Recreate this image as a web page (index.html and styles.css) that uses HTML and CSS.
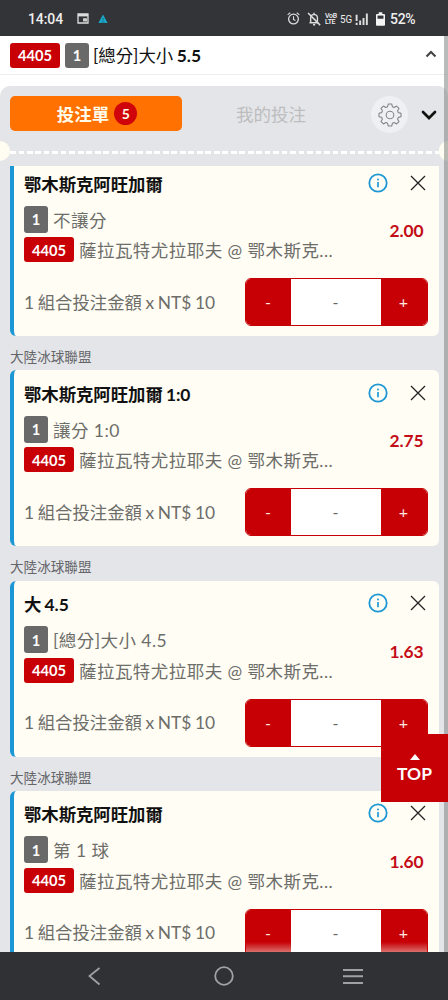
FILE: index.html
```html
<!DOCTYPE html>
<html lang="zh-Hant">
<head>
<meta charset="utf-8">
<meta name="viewport" content="width=device-width">
<title>投注單</title>
<link rel="stylesheet" href="styles.css">
</head>
<body>
<svg class="defs" width="0" height="0">
  <symbol id="info" viewBox="0 0 20 20"><circle cx="10" cy="10" r="8.700" fill="none" stroke="#1e98d4" stroke-width="1.8"/><path d="M10 9v5.2" stroke="#1e98d4" stroke-width="1.7"/><circle cx="10" cy="6.4" r="1" fill="#1e98d4"/></symbol>
  <symbol id="close" viewBox="0 0 16 16"><path d="M1 1l14 14M15 1L1 15" stroke="#222" stroke-width="1.3" fill="none"/></symbol>
</svg>
<div class="screen">
  <header class="status">
    <span class="time">14:04</span>
    <svg class="st-cal" viewBox="0 0 12 11"><path d="M1 1h10v9H1z" fill="none" stroke="#ddd" stroke-width="1.3"/><path d="M1 2.2h10" stroke="#ddd" stroke-width="2.4"/><path d="M6 5.2h4v3.3H6z" fill="#ccc"/></svg>
    <svg class="st-tri" viewBox="0 0 10 10"><path d="M5 .5L9.6 9H.4z" fill="#1ba7c8"/><path d="M5 4v2.500M3.500 9L5 7.500 6.500 9" fill="none" stroke="#176c83" stroke-width=".9"/></svg>
    <svg class="st-alarm" viewBox="0 0 12 12"><circle cx="6" cy="6.5" r="4.5" fill="none" stroke="#ddd" stroke-width="1.2"/><path d="M6 4v2.8l1.8 1M.6 2.6L3 .7M11.4 2.6L9 .7" stroke="#ddd" fill="none"/></svg>
    <svg class="st-bell" viewBox="0 0 13 13"><path d="M2.3 10h8.2M3.4 10V5.6q0-3 3.1-3.4 3.2.4 3.2 3.4V9M5.6 11.8h2M6.5.8v1.4" fill="none" stroke="#ddd" stroke-width="1.3"/><path d="M1 1l11.2 11.2" stroke="#ddd" stroke-width="1.4"/></svg>
    <span class="lte"><span>VoB</span><span>LTE</span></span>
    <span class="net">5G</span>
    <svg class="st-sig" viewBox="0 0 13 13"><path d="M1 2.5v5.8M1 10v2M4.3 8v4M7.4 5.5V12M10.5 1.500V12" transform="translate(.5 0)" stroke="#ddd" stroke-width="1.8"/></svg>
    <svg class="st-bat" viewBox="0 0 10 15"><path d="M3 0h4v2h2q1 0 1 1v11q0 1-1 1H1q-1 0-1-1V3q0-1 1-1h2z" fill="#f4f4f4"/><path d="M1.7 3.7h6.6v3.5H1.7z" fill="#333438"/></svg>
    <span class="pct">52%</span>
  </header>
  <div class="match">
    <span class="tag red">4405</span><span class="tag grey">1</span>
    <span class="market">[總分]大小 <b>5.5</b></span>
    <svg class="up" viewBox="0 0 12 8"><path d="M1.5 6.5L6 2l4.5 4.5" fill="none" stroke="#444" stroke-width="2.1"/></svg>
  </div>
  <main class="slip">
    <nav class="tabs">
      <div class="tab active">投注單<span class="count">5</span></div>
      <div class="tab">我的投注</div>
      <div class="gear"><svg viewBox="-12 -12 24 24"><path d="M-2.400-8.300L-1.700-11H1.700L2.400-8.300 4.170-7.570 6.580-8.980 8.980-6.580 7.570-4.170 8.300-2.400 11-1.700V1.700L8.300 2.400 7.570 4.170 8.980 6.580 6.580 8.980 4.170 7.570 2.400 8.300 1.700 11H-1.700L-2.400 8.300-4.170 7.570-6.580 8.980-8.980 6.580-7.570 4.170-8.300 2.400-11 1.700V-1.700L-8.300-2.400-7.570-4.170-8.980-6.580-6.580-8.980-4.170-7.570z" fill="none" stroke="#858689" stroke-width="1.100" stroke-linejoin="round"/><circle r="3.800" fill="none" stroke="#858689" stroke-width="1.100"/></svg></div>
      <svg class="down" viewBox="0 0 16 10"><path d="M2 2l6 6 6-6" fill="none" stroke="#111" stroke-width="2.7" stroke-linecap="round"/></svg>
    </nav>
    <div class="tear"><i class="notch"></i><i class="dash"></i><i class="notch right"></i></div>
    <div class="list">
      <section class="card first">
        <div class="head"><h2>鄂木斯克阿旺加爾</h2><svg class="info"><use href="#info"/></svg><svg class="close"><use href="#close"/></svg></div>
        <div class="detail">
          <div class="lines"><p class="kind"><span class="tag grey">1</span>不讓分</p><p class="teams"><span class="tag red">4405</span>薩拉瓦特尤拉耶夫 @ 鄂木斯克...</p></div>
          <strong class="odds">2.00</strong>
        </div>
        <div class="stake"><span>1 組合投注金額 x NT$ 10</span><div class="stepper"><b>-</b><em>-</em><b>+</b></div></div>
      </section>
      <h3 class="league">大陸冰球聯盟</h3>
      <section class="card">
        <div class="head"><h2>鄂木斯克阿旺加爾 1:0</h2><svg class="info"><use href="#info"/></svg><svg class="close"><use href="#close"/></svg></div>
        <div class="detail">
          <div class="lines"><p class="kind"><span class="tag grey">1</span>讓分 1:0</p><p class="teams"><span class="tag red">4405</span>薩拉瓦特尤拉耶夫 @ 鄂木斯克...</p></div>
          <strong class="odds">2.75</strong>
        </div>
        <div class="stake"><span>1 組合投注金額 x NT$ 10</span><div class="stepper"><b>-</b><em>-</em><b>+</b></div></div>
      </section>
      <h3 class="league">大陸冰球聯盟</h3>
      <section class="card">
        <div class="head"><h2>大 4.5</h2><svg class="info"><use href="#info"/></svg><svg class="close"><use href="#close"/></svg></div>
        <div class="detail">
          <div class="lines"><p class="kind"><span class="tag grey">1</span>[總分]大小 4.5</p><p class="teams"><span class="tag red">4405</span>薩拉瓦特尤拉耶夫 @ 鄂木斯克...</p></div>
          <strong class="odds">1.63</strong>
        </div>
        <div class="stake"><span>1 組合投注金額 x NT$ 10</span><div class="stepper"><b>-</b><em>-</em><b>+</b></div></div>
      </section>
      <h3 class="league">大陸冰球聯盟</h3>
      <section class="card">
        <div class="head"><h2>鄂木斯克阿旺加爾</h2><svg class="info"><use href="#info"/></svg><svg class="close"><use href="#close"/></svg></div>
        <div class="detail">
          <div class="lines"><p class="kind"><span class="tag grey">1</span>第 1 球</p><p class="teams"><span class="tag red">4405</span>薩拉瓦特尤拉耶夫 @ 鄂木斯克...</p></div>
          <strong class="odds">1.60</strong>
        </div>
        <div class="stake"><span>1 組合投注金額 x NT$ 10</span><div class="stepper last"><b>-</b><em>-</em><b>+</b></div></div>
      </section>
    </div>
  </main>
  <footer class="navbar">
    <svg viewBox="0 0 448 48"><g fill="none" stroke="#a0a1a4" stroke-width="1.8"><path d="M99.5 16L89.500 24l10 8.500"/><circle cx="224" cy="24" r="8.800"/><path d="M343 18h20M343 24.300h20M343 31h20" stroke-width="2"/></g></svg>
  </footer>
  <i class="scrollbar"></i>
  <a class="top"><svg viewBox="0 0 10 6"><path d="M0 6L5 0l5 6z" fill="#fff"/></svg>TOP</a>
</div>
</body>
</html>
```
FILE: styles.css
```css
* { box-sizing: border-box; }
body { margin: 0; background: #fff; font-family: Lato, "Noto Sans CJK TC", sans-serif; }
h2, h3, p { margin: 0; font-weight: 400; }
svg { display: block; flex: none; }
.defs { position: absolute; }
.screen { position: relative; width: 448px; height: 1000px; overflow: hidden; display: flex; flex-direction: column; }

.status { height: 36px; flex: none; background: #333438; color: #eee; display: flex; align-items: center; padding: 1px 0 0 28px; font-family: Roboto, sans-serif; }
.time { width: 35px; font-size: 14px; font-weight: 500; letter-spacing: -.1px; }
.st-cal { width: 12px; height: 11px; margin-left: 14px; }
.st-tri { width: 10px; height: 10px; margin-left: 9px; }
.st-alarm { width: 13px; height: 13px; margin-left: 179px; }
.st-bell { width: 14px; height: 14px; margin-left: 7px; }
.lte { display: flex; flex-direction: column; font-size: 7px; line-height: 6px; font-weight: 500; width: 12px; margin-left: 4px; letter-spacing: -.3px; }
.net { font-size: 11.500px; width: 13px; margin-left: 3px; transform: scaleX(.85); transform-origin: left; }
.st-sig { width: 14px; height: 14px; margin-left: 2px; }
.st-bat { width: 9px; height: 14px; margin-left: 7px; }
.pct { font-size: 14px; font-weight: 500; margin-left: 5px; letter-spacing: -.3px; }

.match { height: 39px; flex: none; display: flex; align-items: center; border-bottom: 1px solid #eee; padding: 0 11px 0 10px; font-size: 17.4px; color: #111; }
.match .grey { margin-left: 5px; }
.market { margin: -1px 0 0 4px; flex: 1; white-space: nowrap; word-spacing: -1px; }
.up { width: 12px; height: 8px; margin-top: -2px; }

.tag { display: inline-flex; align-items: center; justify-content: center; border-radius: 3px; color: #fff; font-weight: 700; font-size: 14.700px; flex: none; }
.tag.red { width: 50px; height: 25px; background: #c80005; }
.tag.grey { width: 24px; height: 27px; background: #696969; }
.match .grey { height: 25px; }

.slip { margin-top: 11px; height: 866px; flex: none; background: #e4e5e8; border-radius: 10px 10px 0 0; overflow: hidden; display: flex; flex-direction: column; }
.tabs { height: 60px; padding: 10px 11px 0 10px; display: flex; align-items: flex-start; flex: none; }
.tab { width: 178px; height: 35px; display: flex; align-items: center; justify-content: center; font-size: 17.5px; color: #bcbdbf; }
.tab.active { width: 172px; background: #ff7100; color: #fffbea; border-radius: 5px; font-weight: 700; padding-left: 2px; }
.count { width: 23px; height: 23px; border-radius: 50%; background: #d0040b; font-size: 14px; margin-left: 5px; display: flex; align-items: center; justify-content: center; }
.gear { width: 37px; height: 37px; margin-left: 11px; border-radius: 50%; background: #eff0f4; display: flex; align-items: center; justify-content: center; }
.gear svg { width: 24px; height: 24px; }
.down { width: 16px; height: 10px; margin: 14px 0 0 13px; }
.tear { height: 20px; flex: none; display: flex; align-items: center; justify-content: space-between; margin: -5px 0 0; }
.notch { width: 10px; height: 20px; background: #fffdf2; border-radius: 0 10px 10px 0; }
.notch.right { border-radius: 10px 0 0 10px; width: 9px; }
.dash { flex: 1; height: 3px; margin-top: 2px; background: repeating-linear-gradient(90deg, #fff 0 5.500px, transparent 5.500px 8.500px); }
.list { margin-top: 5px; height: 786px; overflow: hidden; padding: 0 9.500px 0 10px; }
.card { height: 176px; background: #fffdf4; border-left: 4px solid #1b97d5; border-radius: 6px; padding: 12px 10px 0 10px; }
.card.first { margin-top: -6px; }
.head { height: 24px; display: flex; align-items: center; }
h2 { flex: 1; font-size: 17.400px; font-weight: 700; color: #111; letter-spacing: -.05px; word-spacing: -1px; margin-top: -2px; }
.info { width: 20px; height: 20px; margin-top: -3px; }
.close { width: 16px; height: 16px; margin: -3px 3px 0 22px; }
.detail { height: 66px; padding-top: 9px; display: flex; }
.lines { flex: 1; color: #6d6d6a; font-size: 17.500px; white-space: nowrap; }
.kind, .teams { display: flex; align-items: center; letter-spacing: .45px; }
.kind { height: 28px; }
.teams { height: 25px; margin-top: 4px; }
.lines .tag { margin-right: 5px; letter-spacing: 0; }
.odds { font-size: 17.400px; letter-spacing: -.1px; color: #c40c16; line-height: 24px; margin: 14px 5px 0 0; }
.stake { height: 48px; margin: 16px 1px 0 0; display: flex; align-items: center; justify-content: space-between; color: #6d6d6a; font-size: 17.400px; white-space: nowrap; word-spacing: -.9px; }
.stake span { margin-top: -2px; }
.stepper { width: 183px; height: 48px; border: 1px solid #c60005; border-radius: 6px; overflow: hidden; display: grid; grid-template-columns: 45px 1fr 46px; font-size: 16px; text-align: center; line-height: 46px; }
.stepper b { background: #c60005; color: #ffe5e0; font-weight: 400; }
.stepper em { background: #fff; font-style: normal; color: #666; }
.stepper.last b { background: linear-gradient(#c60005 0 32px, #df8580 44px); }
.league { height: 34.300px; padding-top: 12px; font-size: 13.600px; line-height: 18px; color: #65666a; }

.navbar { height: 48px; flex: none; background: #303135; }
.scrollbar { position: absolute; right: 0; top: 36px; width: 4px; height: 916px; background: rgba(130, 132, 132, .55); }
.top { position: absolute; right: 0; top: 734px; width: 67px; height: 68px; background: #c60005; color: #fff; display: flex; flex-direction: column; align-items: center; padding-top: 20px; font-size: 17.400px; font-weight: 700; line-height: 28px; }
.top svg { width: 10px; height: 6px; }
```
